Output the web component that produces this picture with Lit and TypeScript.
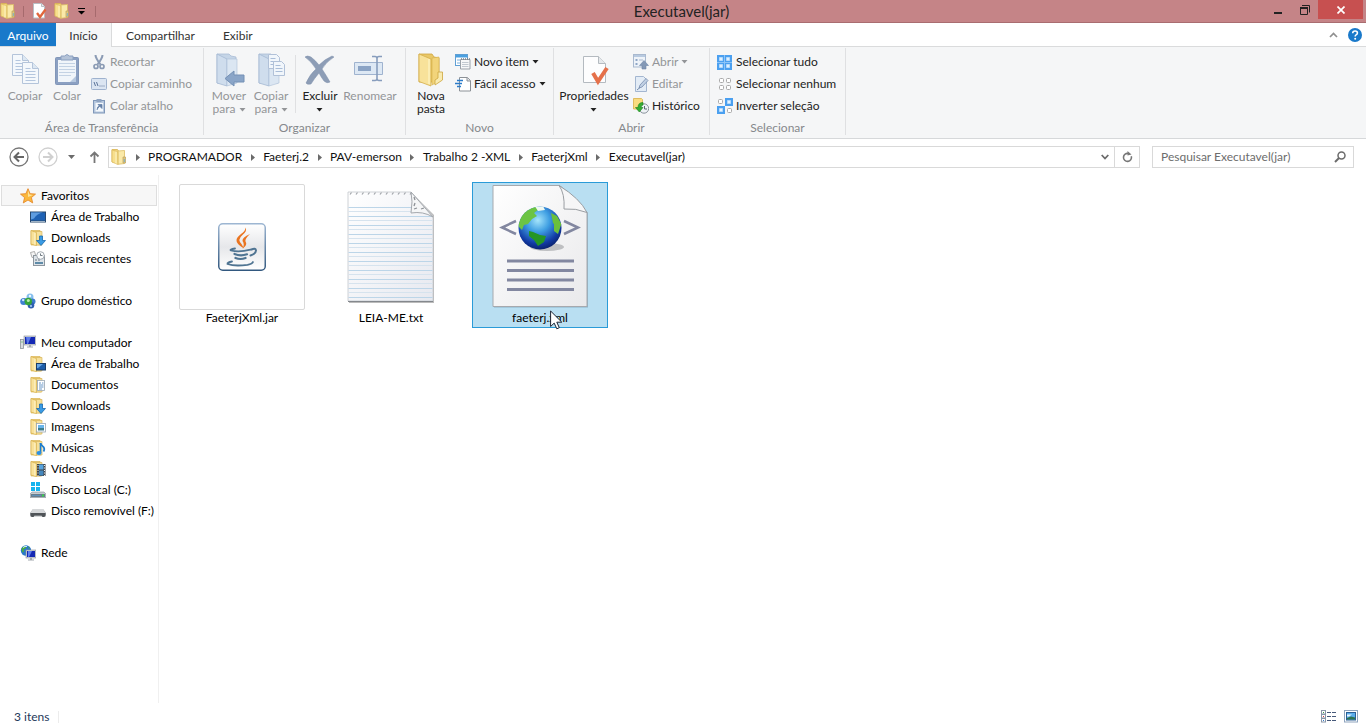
import { LitElement, html, css, svg, nothing, type TemplateResult, type SVGTemplateResult } from "lit";
import { customElement } from "lit/decorators.js";

const icon = (w: number, h: number, body: SVGTemplateResult, vw = w, vh = h) =>
  html`<svg width=${w} height=${h} viewBox="0 0 ${vw} ${vh}" aria-hidden="true">${body}</svg>`;

/* ---- shared shapes, drawn on a 16x16 grid ---- */
const folder = svg`
  <path d="M1 .5h5.500l1 1.500v11H1z" fill="#f0d27a" stroke="#d8b352" stroke-width=".8"/>
  <path d="M7 2l6.500-.5v13l-6.500.8z" fill="#fae9a8" stroke="#dcbd63" stroke-width=".8"/>
  <path d="M1 .8L6.800 3v12.500L1 13z" fill="#f7df8d" stroke="#dab75a" stroke-width=".7"/>
  <path d="M5 2.500v12" stroke="#fdf3c4"/>
  <path d="M12 8h2.500v6H12z" fill="#e3c77a" stroke="#b9a160" stroke-width=".7"/><path d="M13.300 10v3" stroke="#7ab0c8"/>`;
const sideFolder = svg`
  <path d="M1 .5h9l1 1v13.500H1z" fill="#e9c565" stroke="#d6b04c" stroke-width=".6"/>
  <path d="M6 1.500h6v13.500H6z" fill="#f6e09a" stroke="#dab963" stroke-width=".7"/>
  <path d="M1 .5l5.500 2.200v13L1 14z" fill="#f8e19a" stroke="#d8b352" stroke-width=".7"/>
  <path d="M4.800 2.500v12" stroke="#fdf2c6"/>`;
const globe = svg`
  <circle cx="6" cy="5.500" r="5.200" fill="#2a78c8"/>
  <path d="M1.500 4c1-2.500 3-3.300 5-3l-1 2.500-2 1 .5 2-1.500 1zM6 5.500l3 .5-1 3.500-2-1zM8 1.500l2 1.500-1 1z" fill="#4cae3c"/>
  <path d="M3 2.500q2-1.700 4-1" stroke="#d5f0ff" fill="none"/>`;
const monitor = (x: number, y: number, w: number, h: number) => svg`
  <rect x=${x} y=${y} width=${w} height=${h} fill="#cfd3d8" stroke="#8b9299" stroke-width=".6"/>
  <rect x=${x + 1} y=${y + 1} width=${w - 2} height=${h - 2} fill="#1428b4"/>
  <path d="M${x + 2} ${y + 1}h${w / 2 - 1}l-3 ${h - 2}h-1z" fill="#5c7bea"/>
  <path d="M${x + w / 2 - 1} ${y + h}h2v1.500h2v1h-6v-1h2z" fill="#a4aab0"/>`;

const small: Record<string, SVGTemplateResult> = {
  folder,
  props: svg`<path d="M2.500 .5h8l3 3v11.500h-11z" fill="#fff" stroke="#b9bec4"/><path d="M10.500 .5v3h3" fill="#e8ebee" stroke="#b9bec4"/>
    <path d="M6 10l3 4 5.500-7.500" fill="none" stroke="#e0663c" stroke-width="2.300"/>`,
  cut: svg`<g fill="none" stroke="#8b9bb4"><path d="M4.500 1q0 3 5 9.500M11.500 1q0 3-5 9.500" stroke-width="2"/><circle cx="5" cy="12.500" r="2" stroke-width="1.700"/><circle cx="11" cy="12.500" r="2" stroke-width="1.700"/></g>`,
  path: svg`<rect x=".5" y="2.500" width="15" height="11" rx="1" fill="#dbe5f2" stroke="#9fb2ce"/><path d="M3 6l1.500 4M5.500 6l1.500 4" stroke="#5c7499"/><path d="M8.500 10h1M10.500 10h1M12.500 10h1" stroke="#5c7499"/>`,
  shortcut: svg`<rect x="2.500" y="2.500" width="11" height="12.500" fill="#b7c8de" stroke="#7f97b9"/><rect x="5.500" y="1" width="5" height="3" fill="#8ea3c1"/><rect x="4.500" y="5" width="7.500" height="8.500" fill="#f4f8fc"/><path d="M6 12q0-4 3-4M7 6.500h4v4z" fill="#6682a8" stroke="#6682a8" stroke-width=".8"/>`,
  newItem: svg`<rect x=".5" y=".5" width="12" height="11" fill="#fff" stroke="#5f9fd4"/><path d="M1 1h11v2.500H1z" fill="#4aa0e0"/><path d="M2 6h3M2 9h3" stroke="#79aedb"/>
    <path d="M5.500 5.500h9.500v9.500h-9.500z" fill="#f7f8f9" stroke="#9aa1a9"/><path d="M7 8.500h6.500M7 10.500h6.500M7 12.500h6.500" stroke="#b4bdc7" stroke-width=".8"/><path d="M6.500 4v2M8.500 4v2M10.500 4v2M12.500 4v2M14.500 4v2" stroke="#7c858e" stroke-width=".8"/>`,
  easy: svg`<path d="M4.500 1.500h8l3 3v10.500h-11z" fill="#fff" stroke="#8c9197"/><path d="M12 1.500v3.500h3.500" fill="#dfe3e7" stroke="#8c9197"/><path d="M2 4.500h6M0 7.500h7M2 10.500h4" stroke="#2b7bc9" stroke-width="1.300"/>`,
  open: svg`<rect x=".5" y=".5" width="12" height="12.500" fill="#eef3f9" stroke="#a9b9cf"/><path d="M1 1h11v2H1z" fill="#b8cae0"/><path d="M2.500 5h2v2h-2zM2.500 9h2v2h-2z" fill="#8fa7c7"/><path d="M6 6h4" stroke="#a9b9cf"/><path d="M11 6.500l4.500 5h-2.500v3.500h-4v-3.500H6.500z" fill="#8398b6" stroke="#6f86a8" stroke-width=".6"/>`,
  edit: svg`<path d="M2.500 .5h8l3 3v12h-11z" fill="#e3ecf6" stroke="#a3b6d0"/><path d="M6 12l1-3 6-6.500 2 2-6 6.500z" fill="#c0d0e4" stroke="#768cad" stroke-width=".8"/><path d="M4 14l3-2.500" stroke="#768cad"/>`,
  history: svg`<path d="M.5 .5h8l1 1v9.500H.5z" fill="#f9dc80" stroke="#d9b049" stroke-width=".8"/><circle cx="11" cy="10.500" r="4.700" fill="#eef2f5" stroke="#88929b"/><path d="M11.500 8v3h2.500" fill="none" stroke="#5b6570"/><path d="M10 4.500q-5 0-5 5H2.500l3.800 4.500 3.700-4.500H8q0-2.200 2-2.500z" fill="#35ad33" stroke="#17801b" stroke-width=".6"/>`,
  selAll: svg`<path d="M0 1h15v15H0z" fill="#4ba0f0"/><path d="M7.500 1v15M0 8.500h15" stroke="#8cc4f8"/><path d="M2.500 3.500h3v3h-3zM9.500 3.500h3v3h-3zM2.500 10.500h3v3h-3zM9.500 10.500h3v3h-3z" fill="#dff0ff" stroke="#b4dafc"/>`,
  selNone: svg`<g fill="#fff" stroke="#a8a8a8"><rect x="2.500" y="2.500" width="4" height="4" rx="1"/><rect x="9.500" y="2.500" width="4" height="4" rx="1"/><rect x="2.500" y="9.500" width="4" height="4" rx="1"/><rect x="9.500" y="9.500" width="4" height="4" rx="1"/></g>`,
  selInv: svg`<path d="M8 0h8v8H8zM0 8h8v8H0z" fill="#4ba0f0"/><g fill="#e6f4ff" stroke="#b4dafc"><path d="M10.500 2.500h3v3h-3zM2.500 10.500h3v3h-3z"/></g><g fill="#fff" stroke="#a8a8a8"><rect x="1.500" y="1.500" width="4" height="4" rx="1"/><rect x="10.500" y="10.500" width="4" height="4" rx="1"/></g>`,
  star: svg`<path d="M8 .7l2.100 5 5.400.4-4.100 3.500 1.300 5.300L8 12l-4.700 2.900 1.300-5.300L.5 6.100l5.400-.4z" fill="#fbb83c" stroke="#e58a2c" stroke-width=".9"/><path d="M8 2.500l1.400 4 3.600.4-5 2z" fill="#fde39a"/>`,
  desktop: svg`<rect x="0" y="2.500" width="16" height="11" fill="#27486f"/><rect x="1" y="3.500" width="14" height="8" fill="#1f62b4"/><path d="M1 3.500h12q-6 1-9 6l-3 1z" fill="#5e9ce0"/><path d="M1 12.500h14" stroke="#9fb3c6"/>`,
  downloads: svg`${sideFolder}<path d="M9.500 6h3v4.500h3L11 15.500 6.500 10.500h3z" fill="#3a9be4" stroke="#1769b3" stroke-width=".8"/>`,
  recent: svg`<path d="M.5 1.500l4-1 1.500 5-4 1z" fill="#f5f5f5" stroke="#9a9a9a" stroke-width=".8"/><rect x="3.500" y="4.500" width="11" height="10" fill="#dde3e8" stroke="#8d969e"/><path d="M5 12h8" stroke="#5f8ba8" stroke-width="2"/><path d="M5 9h2M8 9h2" stroke="#6b7681"/><circle cx="10.500" cy="4.500" r="3.800" fill="#fafcfd" stroke="#a2a9b0"/><path d="M10.500 2.500v2h2" fill="none" stroke="#4e5962" stroke-width=".8"/>`,
  homegroup: svg`<circle cx="3.800" cy="8.500" r="3.600" fill="#3f80d2"/><circle cx="10" cy="4" r="3.500" fill="#86bfee"/><circle cx="12.500" cy="8.500" r="3" fill="#3c7bcb"/><circle cx="11" cy="12.300" r="3.300" fill="#2f5fb0"/><circle cx="8.300" cy="8.500" r="3.700" fill="#36a53a"/><circle cx="3.200" cy="7" r="1.200" fill="#cfe5fb"/><circle cx="10" cy="3" r="1.200" fill="#edf8ff"/><circle cx="11" cy="13" r="1.100" fill="#a7cdf4"/><circle cx="8.300" cy="7.500" r="1.500" fill="#b8edae"/>`,
  computer: svg`<rect x=".5" y="4.500" width="3" height="9" fill="#d9dcdf" stroke="#8d949b" stroke-width=".8"/><path d="M1.500 7h1" stroke="#2fb23a"/>${monitor(4, 1, 12, 9)}`,
  fDesktop: svg`${sideFolder}<rect x="6.500" y="7.500" width="9" height="6.500" fill="#1f5ea9" stroke="#1b3d68"/><path d="M7 8h6l-5 4h-1z" fill="#68a7e6"/>`,
  fDocs: svg`${sideFolder}<rect x="7.500" y="3.500" width="7" height="10" fill="#fff" stroke="#9aa7b4" stroke-width=".8"/><path d="M9 6h2M12 6h1.500M9 8h4.500M9 10h4.500M9 12h3" stroke="#5a8cc2" stroke-width=".9"/>`,
  fPics: svg`${sideFolder}<rect x="6.500" y="4.500" width="9" height="8.500" fill="#fff" stroke="#9aa7b4" stroke-width=".8"/><rect x="8" y="6" width="6" height="3" fill="#67b4ea"/><rect x="8" y="9" width="6" height="2.500" fill="#3e7d8c"/>`,
  fMusic: svg`${sideFolder}<path d="M10.500 3q0 2 3 4 1.500 2 0 4.500" fill="none" stroke="#1d7dd0" stroke-width="1.800"/><path d="M10.500 3v10" stroke="#1d7dd0" stroke-width="1.600"/><ellipse cx="9" cy="13" rx="2.500" ry="2" fill="#2b90e4"/>`,
  fVideo: svg`${sideFolder}<rect x="7" y="3" width="8.500" height="12" fill="#3e4348"/><rect x="9" y="3.500" width="4.500" height="5" fill="#57a3de"/><rect x="9" y="9.500" width="4.500" height="5" fill="#4588bd"/><path d="M8 4v11M14.500 4v11" stroke="#eee" stroke-dasharray="1 1.500"/>`,
  disk: svg`<path d="M1 0h4v4H1zM6 0h4v4H6zM1 5h4v4H1zM6 5h4v4H6z" fill="#16b4ee"/><path d="M2 10h12l2 2v3.500H0V12z" fill="#c4cbd1" stroke="#868f97" stroke-width=".6"/><rect x="1" y="12" width="14" height="3" fill="#6b7d8b"/><path d="M2 13.500h9" stroke="#5c90b8"/><path d="M12 13.500h2" stroke="#38d44b" stroke-width="2"/>`,
  removable: svg`<path d="M3 6h10l3 4v3.500H0V10z" fill="#a9adb0"/><path d="M3 6h10l2.500 4H.5z" fill="#d6d8da"/><path d="M.5 10h15v2l-1 2h-2l-1-1.500H4.500L3.500 14h-2l-1-2z" fill="#505458"/>`,
  network: svg`${globe}${monitor(6, 5, 10, 8)}`,
};

const deskFolder = (extra: SVGTemplateResult) => svg`
  <path d="M5 1h12l2 2 5 1v26H5z" fill="#c5d5e7" stroke="#a9bdd6" stroke-width=".8"/>
  <path d="M5 1l10 5v27L5 30z" fill="#cfdded" stroke="#a4b9d3" stroke-width=".8"/>
  <path d="M15 6h10v24l-10 3z" fill="#dbe6f2" stroke="#adc0d7" stroke-width=".6"/>${extra}`;
const page = (x: number, y: number) => svg`
  <path d="M${x} ${y}h10l6 6v15h-16z" fill="#f4f8fc" stroke="#b4c4da"/>
  <path d="M${x + 10} ${y}v6h6" fill="#dce7f2" stroke="#b4c4da"/>
  <path d="M${x + 3} ${y + 6}h5M${x + 3} ${y + 9}h10M${x + 3} ${y + 12}h10M${x + 3} ${y + 15}h10M${x + 3} ${y + 18}h10" stroke="#b4c6de"/>`;
const miniPage = (x: number, y: number) => svg`
  <path d="M${x} ${y}h8l3 3v11h-11z" fill="#f1f6fb" stroke="#b1c1d8"/>
  <path d="M${x + 2} ${y + 4}h5M${x + 2} ${y + 7}h7M${x + 2} ${y + 10}h7" stroke="#a9bdd8"/>`;

const large: Record<string, SVGTemplateResult> = {
  copy: svg`${page(4.500, 1.500)}${page(14.500, 9.500)}`,
  paste: svg`<rect x="5.500" y="4.500" width="23" height="27" rx="1" fill="#8ba0c2" stroke="#8196b8"/><rect x="8" y="7" width="18" height="22" fill="#f0f5fa"/><path d="M9 10.500h16M9 13.500h16M9 16.500h16M9 19.500h16M9 22.500h12" stroke="#c3d2e4"/><path d="M20 29l6-6v6z" fill="#b5c7de"/><path d="M11 3h3.500q2.500-3 5 0H23v4H11z" fill="#b4c3d8" stroke="#8ba0c0"/>`,
  move: deskFolder(svg`<path d="M22 18l-9 7.500 9 7.500v-4h10v-7H22z" fill="#8aa5c8" stroke="#7490b5"/>`),
  copyTo: deskFolder(svg`${miniPage(14.500, 1.500)}${miniPage(19.500, 8.500)}`),
  remove: svg`<path d="M2 4q2-2 6 0 4 3 8 8Q22 6 29 3l2 1q-8 5-12 12 4 6 8 13-3 2-6-1-3-4-5-8-5 6-8 11-4 1-5-1 4-9 10-14Q8 8 2 4z" fill="#8d9db6" stroke="#7d8faa" stroke-width=".5"/>`,
  rename: svg`<path d="M1.500 9.500h28v12h-28z" fill="#dde8f4" stroke="#9fb3cf"/><path d="M5 13h13v5H5z" fill="#8aa3c5"/><path d="M19 3.500h3q2 0 2 2v20q0 2-2 2h-3M29 3.500h-3q-2 0-2 2v20q0 2 2 2h3" fill="none" stroke="#879dbd" stroke-width="1.600"/>`,
  newFolder: svg`<path d="M5 1h13l2 3 5 1v24H5z" fill="#e9c766" stroke="#cfa63f" stroke-width=".8"/><path d="M18 5l7-1v24l-7 4z" fill="#f2d47a" stroke="#d4ae4a" stroke-width=".6"/><path d="M5 1l12 5v27L5 28.500z" fill="#f8e29a" stroke="#d4ae4a" stroke-width=".8"/><path d="M15 6v25" stroke="#fdf1bd" stroke-width="1.500"/><path d="M24 19h4.500v8L21 32v-5l3-2z" fill="#f9ebb0" stroke="#cda63f" stroke-width=".8"/>`,
  properties: svg`<path d="M6.500 3.500h15l7 7v19h-22z" fill="#fdfdfe" stroke="#b4bac0"/><path d="M21.500 3.500v7h7" fill="#e6e9ec" stroke="#b4bac0"/><path d="M16 20l5 8.500 9-13.500" fill="none" stroke="#e5704a" stroke-width="4"/>`,
};

const caret = () => html`<svg class="caret" width="7" height="4" viewBox="0 0 7 4" aria-hidden="true"><path d="M.5 0h6L3.500 3.500z" fill="currentColor"/></svg>`;

type Big = { k: string; lines: string[]; off?: boolean; drop?: boolean; w: string };
type Small = { k: string; t: string; off?: boolean; drop?: boolean };
type Group = { name: string; big: (Big | null)[]; small: Small[]; w: string };

const groups: Group[] = [
  { name: "Área de Transferência", w: "g-clip", big: [{ k: "copy", lines: ["Copiar"], off: true, w: "b-m" }, { k: "paste", lines: ["Colar"], off: true, w: "b-m" }],
    small: [{ k: "cut", t: "Recortar", off: true }, { k: "path", t: "Copiar caminho", off: true }, { k: "shortcut", t: "Colar atalho", off: true }] },
  { name: "Organizar", w: "g-org", big: [{ k: "move", lines: ["Mover", "para"], off: true, drop: true, w: "b-m" }, { k: "copyTo", lines: ["Copiar", "para"], off: true, drop: true, w: "b-m" }, null,
    { k: "remove", lines: ["Excluir", ""], drop: true, w: "b-m" }, { k: "rename", lines: ["Renomear"], off: true, w: "b-l" }], small: [] },
  { name: "Novo", w: "g-new", big: [{ k: "newFolder", lines: ["Nova", "pasta"], w: "b-m" }], small: [{ k: "newItem", t: "Novo item", drop: true }, { k: "easy", t: "Fácil acesso", drop: true }] },
  { name: "Abrir", w: "g-open", big: [{ k: "properties", lines: ["Propriedades", ""], drop: true, w: "b-xl" }],
    small: [{ k: "open", t: "Abrir", off: true, drop: true }, { k: "edit", t: "Editar", off: true }, { k: "history", t: "Histórico" }] },
  { name: "Selecionar", w: "g-sel", big: [], small: [{ k: "selAll", t: "Selecionar tudo" }, { k: "selNone", t: "Selecionar nenhum" }, { k: "selInv", t: "Inverter seleção" }] },
];

const places: { k: string; t: string; on?: boolean; kids: [string, string][] }[] = [
  { k: "star", t: "Favoritos", on: true, kids: [["desktop", "Área de Trabalho"], ["downloads", "Downloads"], ["recent", "Locais recentes"]] },
  { k: "homegroup", t: "Grupo doméstico", kids: [] },
  { k: "computer", t: "Meu computador", kids: [["fDesktop", "Área de Trabalho"], ["fDocs", "Documentos"], ["downloads", "Downloads"], ["fPics", "Imagens"], ["fMusic", "Músicas"], ["fVideo", "Vídeos"], ["disk", "Disco Local (C:)"], ["removable", "Disco removível (F:)"]] },
  { k: "network", t: "Rede", kids: [] },
];

const crumbs = ["PROGRAMADOR", "Faeterj.2", "PAV-emerson", "Trabalho 2 -XML", "FaeterjXml", "Executavel(jar)"];

const jarArt = html`<span class="thumb"><svg width="48" height="48" viewBox="0 0 48 48" aria-hidden="true">
  <defs><linearGradient id="jb" x1="0" y1="0" x2="0" y2="1"><stop offset="0" stop-color="#fff"/><stop offset=".5" stop-color="#e6e7ea"/><stop offset="1" stop-color="#fff"/></linearGradient>
  <linearGradient id="je" x1="0" y1="0" x2="0" y2="1"><stop offset="0" stop-color="#9db6d2"/><stop offset="1" stop-color="#32587f"/></linearGradient></defs>
  <rect x=".75" y=".75" width="46.500" height="46.500" rx="4" fill="url(#jb)" stroke="url(#je)" stroke-width="1.500"/>
  <path d="M27.500 4.500q2 3.500-3 7.500-5.500 4.500-1 9l2.500 4.500q-8-4.500-7.500-8.500 0-2.500 4.500-6 4.500-3 4.500-6.500z" fill="#ea7420"/>
  <path d="M32 11q-8 3.500-7.500 7 2.500 3.500 0 7.500 5.500-3.500 3-7-1-2.500 4.500-7.500z" fill="#ea7420"/>
  <g fill="none" stroke="#4f7492" stroke-linecap="round"><path d="M17 25.500q-6 1-4 2 8 2 19.500-.8" stroke-width="1.800"/><path d="M33.500 26.500q4-2 4.500 1 0 3-5.500 5" stroke-width="2"/><path d="M16.500 31q6 2.500 12.500.3M17.500 35q5 2 10 0" stroke-width="2.200"/><path d="M14 38.500q-5 1-4.500 2.500 7 2.500 20 .8 5-1 5.500-2.800" stroke-width="1.800"/></g>
</svg></span>`;

const ruled = Array.from({ length: 11 }, (_, i) => 16 + i * 9);
const txtArt = html`<svg width="88" height="114" viewBox="0 0 88 114" aria-hidden="true">
  <defs><linearGradient id="tp" x1="0" y1="0" x2="1" y2="1"><stop offset="0" stop-color="#fff"/><stop offset="1" stop-color="#e7e9f0"/></linearGradient></defs>
  <path d="M2 3h63l22 22v88H2z" fill="#777" opacity=".5"/>
  <path d="M1 2h63l22 24v85H1z" fill="url(#tp)" stroke="#c3c6cb" stroke-width=".8"/>
  ${ruled.map(y => svg`<path d="M1.500 ${y + 1.5}h${y < 22 ? 63 : 84}" stroke="#bcd5e8"/><path d="M1.500 ${y + 5.5}h${y < 22 ? 63 : 84}" stroke="#d6e3ee"/>`)}
  <path d="M64 2q2 9 0 21 12-2 22 4z" fill="#f5f6f7" stroke="#a4a8ad"/>
  <path d="M67 7l1 3M68 13l-1 3M67 19l3-1M74 19l3-1" stroke="#8d9196" stroke-width="1.300"/>
  ${Array.from({ length: 11 }, (_, i) => svg`<path d="M${3 + i * 6} 4.500l1.500-2" stroke="#a0a4a9" stroke-width="1.200"/>`)}
  <path d="M1 111.500h85" stroke="#84888d"/>
</svg>`;

const xmlArt = html`<svg width="100" height="126" viewBox="0 0 100 126" aria-hidden="true">
  <defs><linearGradient id="xp" x1="0" y1="0" x2="1" y2="1"><stop offset="0" stop-color="#fff"/><stop offset="1" stop-color="#e9e9eb"/></linearGradient>
  <radialGradient id="xg" cx=".45" cy=".32" r=".68"><stop offset="0" stop-color="#a5e5fb"/><stop offset=".4" stop-color="#3e9ee2"/><stop offset=".8" stop-color="#123ba5"/><stop offset="1" stop-color="#0a2370"/></radialGradient>
  <clipPath id="xc"><circle cx="50" cy="44" r="21.500"/></clipPath></defs>
  <path d="M4 3h68l26 26v94.500H4z" fill="#5a7d93" opacity=".45"/>
  <path d="M3 1.500h67l27 27v94H3z" fill="url(#xp)" stroke="#a6a9ae"/>
  <path d="M69 1.500q6 8 5 23.500 12-1 23 3.500-7-14-28-27z" fill="#f6f6f7" stroke="#9a9ea3"/>
  <ellipse cx="57" cy="63" rx="17" ry="4" fill="#8b8d92" opacity=".5"/>
  <circle cx="50" cy="44" r="21.500" fill="url(#xg)"/>
  <g clip-path="url(#xc)"><path d="M31 32q5-8 13-10l5 3-5 4 3 3-5 3-4 5-4 1-2 5-4-4z" fill="#6cc443"/><path d="M39 47l4 1 7 3 6 1-2 6-6 4-4-6-5-4z" fill="#259625"/><path d="M61 29l6 3 5 9-5 2-4-4zM64 39l7 2-3 9-4-3z" fill="#6abf3b"/><path d="M45 22.500l8-.5 2 4-7 1z" fill="#eef8f2"/></g>
  <g fill="none" stroke="#8287a0" stroke-width="2.500"><path d="M26 37L12 43.500 26 50M74 37l14 6.500L74 50"/><path d="M17 77h67M17 86.500h67M17 96h67M17 105.500h67" stroke-width="3"/></g>
</svg>`;

@customElement("app-root")
export class AppRoot extends LitElement {
  static styles = css`
    :host { display: flex; flex-direction: column; min-height: 100vh; background: #fff; color: #000;
      font-family: Lato, "Open Sans", sans-serif; font-size: 12px; line-height: 16px; }
    * { box-sizing: border-box; }
    button { font: inherit; color: inherit; background: none; border: 0; padding: 0; margin: 0; }
    svg { display: block; flex: none; }
    a { color: inherit; text-decoration: none; }

    .title { display: grid; grid-template-columns: 1fr auto 1fr; height: 23px; padding-right: 3px; background: #c58487; border-bottom: 1px solid #a96d70; }
    .title h1 { margin: 0; font-size: 15px; font-weight: 400; line-height: 22px; color: #222; }
    .quick { display: flex; align-items: center; gap: 7px; }
    .quick .bar:last-child { margin-left: 2px; }
    .bar { width: 1px; height: 11px; background: #a66a6d; }
    .win { display: flex; justify-content: flex-end; color: #222; }
    .win button { width: 27px; height: 19px; display: grid; place-items: center; }
    .win .close { width: 45px; background: #c75050; color: #fff; }

    .tabs { display: flex; height: 24px; border-bottom: 1px solid #dadbdc; }
    .tabs button { padding: 2px 14px 0; color: #333; white-space: nowrap; }
    .tabs .file { width: 56px; padding: 2px 0 0; background: #1979ca; color: #fff; }
    .tabs .on { width: 56px; padding: 2px 0 0; height: 24px; background: #f5f6f7; border-right: 1px solid #dadbdc; }
    .tabs .end { margin-left: auto; display: flex; align-items: center; gap: 10px; padding-right: 4px; }
    .tabs .end button { padding: 0; }

    .ribbon { display: flex; height: 92px; padding-top: 1px; background: #f5f6f7; border-bottom: 1px solid #d6d8da; color: #222; }
    .group { display: flex; flex-direction: column; margin-bottom: 3px; border-right: 1px solid #dfe0e2; }
    .g-clip { width: 204px; } .g-org { width: 202px; } .g-new { width: 148px; } .g-open { width: 156px; } .g-sel { width: 136px; }
    .tools { display: flex; height: 74px; padding: 3px 4px 0; }
    .group h2 { margin: 0; text-align: center; font-size: 12px; font-weight: 400; line-height: 14px; color: #85888c; }
    .big { display: flex; flex-direction: column; align-items: center; padding-top: 2px; line-height: 13px; white-space: nowrap; }
    .big svg.caret { display: inline-block; vertical-align: middle; }
    .big .txt { padding-top: 2px; text-align: center; }
    .b-m { width: 42px; } .b-l { width: 58px; } .b-xl { width: 72px; }
    .split { width: 1px; height: 58px; margin: 4px 3px; background: #dfe0e2; }
    .stack { display: flex; flex-direction: column; padding-left: 3px; }
    .row { display: flex; align-items: center; gap: 3px; height: 22px; white-space: nowrap; }
    .ribbon .off { color: #939598; }

    .address { display: flex; align-items: flex-start; padding: 7px 12px 7px 9px; color: #6b6b6b; }
    .arrows { display: flex; align-items: center; width: 99px; height: 22px; }
    .arrows button { margin-right: 9px; }
    .box { display: flex; align-items: center; height: 22px; border: 1px solid #d9d9d9; background: #fff; }
    .path { flex: 1; padding-left: 2px; }
    .crumb { color: #111; white-space: nowrap; }
    .sep { width: 21px; display: grid; place-items: center; }
    .path .drop { margin-left: auto; width: 19px; display: grid; place-items: center; }
    .path .reload { width: 25px; height: 20px; border-left: 1px solid #d9d9d9; display: grid; place-items: center; }
    .search { width: 202px; margin-left: 12px; padding: 0 7px 0 8px; }
    .search input { flex: 1; min-width: 0; font: inherit; border: 0; outline: 0; padding: 0; background: none; }
    .search input::placeholder { color: #6d6d6d; opacity: 1; }

    .body { display: flex; flex: 1; }
    nav { width: 159px; padding: 10px 1px 0; border-right: 1px solid #f0f0f0; }
    nav ul { list-style: none; margin: 0; padding: 0; }
    nav .place { margin-bottom: 21px; }
    nav a { display: flex; align-items: center; gap: 5px; height: 21px; padding-left: 19px; white-space: nowrap; }
    nav ul ul a { padding-left: 29px; }
    nav a.on { padding-left: 18px; background: #f7f7f7; border: 1px solid #dedede; }
    .files { display: flex; flex: 1; align-items: flex-start; gap: 13px; padding: 7px 15px; }
    .file-item { position: relative; display: flex; flex-direction: column; align-items: center; width: 136px; height: 146px; padding: 1px 0; border: 1px solid transparent; }
    .file-item.sel { background: #b9dff2; border-color: #2a9bd8; }
    .art { display: grid; place-items: center; height: 126px; }
    .thumb { display: grid; place-items: center; width: 126px; height: 126px; border: 1px solid #d9d9d9; border-radius: 2px; background: #fff; }
    .pointer { position: absolute; left: 77px; top: 127px; }

    .status { display: flex; align-items: center; height: 24px; padding: 3px 8px 0 14px; color: #1e395b; }
    .status i { width: 1px; height: 12px; margin-left: 9px; background: #ececec; }
    .views { display: flex; gap: 7px; margin-left: auto; }
  `;

  private bigButton(b: Big | null): TemplateResult {
    if (!b) return html`<span class="split"></span>`;
    const last = b.lines.length - 1;
    return html`<button class="big ${b.w} ${b.off ? "off" : ""}">${icon(34, 34, large[b.k])}
      <span class="txt">${b.lines.map((l, i) => html`${i ? html`<br>` : nothing}${l}${b.drop && i === last ? html` ${caret()}` : nothing}`)}</span></button>`;
  }

  private group(g: Group) {
    return html`<section class="group ${g.w}">
      <div class="tools">${g.big.map(b => this.bigButton(b))}
        ${g.small.length ? html`<div class="stack">${g.small.map(s => html`<button class="row ${s.off ? "off" : ""}">${icon(16, 16, small[s.k])}${s.t}${s.drop ? caret() : nothing}</button>`)}</div>` : nothing}
      </div><h2>${g.name}</h2></section>`;
  }

  render() {
    return html`
      <header class="title">
        <div class="quick">
          ${icon(16, 16, folder)}<span class="bar"></span>
          <button aria-label="Propriedades">${icon(16, 16, small.props)}</button>
          <button aria-label="Nova pasta">${icon(16, 16, folder)}</button>
          <button aria-label="Personalizar">${icon(9, 8, svg`<path d="M1 1.500h7" stroke="#000"/><path d="M1 4h7L4.500 7.500z"/>`)}</button>
          <span class="bar"></span>
        </div>
        <h1>Executavel(jar)</h1>
        <div class="win">
          <button aria-label="Minimizar">${icon(8, 10, svg`<path d="M0 8h8" stroke="#222" stroke-width="2"/>`)}</button>
          <button aria-label="Restaurar">${icon(10, 10, svg`<path d="M2 .5h7.500v7" fill="none" stroke="#222"/><path d="M.5 3h7v6.500h-7z" fill="none" stroke="#222"/><path d="M0 3h8" stroke="#222" stroke-width="2"/>`)}</button>
          <button class="close" aria-label="Fechar">${icon(8, 8, svg`<path d="M.5 .5l7 7M7.500 .5l-7 7" stroke="#fff" stroke-width="1.700"/>`)}</button>
        </div>
      </header>
      <div class="tabs">
        <button class="file">Arquivo</button><button class="on">Início</button><button>Compartilhar</button><button>Exibir</button>
        <div class="end">
          <button aria-label="Minimizar a faixa">${icon(9, 6, svg`<path d="M1 5l3.500-3.500L8 5" fill="none" stroke="#8f8f8f" stroke-width="1.700"/>`)}</button>
          <button aria-label="Ajuda">${icon(14, 14, svg`<circle cx="7" cy="7" r="7" fill="#1979ca"/><path d="M4.700 5.200q0-2.200 2.400-2.200 2.300 0 2.300 2 0 1.200-1.300 1.900-.9.500-.9 1.600" fill="none" stroke="#fff" stroke-width="1.600"/><circle cx="7.200" cy="10.800" r="1" fill="#fff"/>`)}</button>
        </div>
      </div>
      <div class="ribbon">${groups.map(g => this.group(g))}</div>
      <div class="address">
        <div class="arrows">
          <button aria-label="Voltar">${icon(20, 20, svg`<circle cx="10" cy="10" r="9" fill="none" stroke="#777" stroke-width="1.300"/><path d="M15 10H6M10 5.500L5.500 10l4.500 4.500" fill="none" stroke="#666" stroke-width="2"/>`)}</button>
          <button aria-label="Avançar">${icon(20, 20, svg`<circle cx="10" cy="10" r="9" fill="none" stroke="#d0d0d0" stroke-width="1.300"/><path d="M5 10h9M10 5.500l4.500 4.500-4.500 4.500" fill="none" stroke="#d0d0d0" stroke-width="2"/>`)}</button>
          <button aria-label="Locais recentes">${icon(9, 8, svg`<path d="M1 2h7L4.500 6z" fill="#6b6b6b"/>`)}</button>
          <button aria-label="Acima">${icon(18, 14, svg`<path d="M9.500 13V3M5.500 6.500l4-4 4 4" fill="none" stroke="#777" stroke-width="1.800"/>`)}</button>
        </div>
        <div class="box path">${icon(16, 16, folder)}
          ${crumbs.map(c => html`<span class="sep">${icon(4, 7, svg`<path d="M0 0l4 3.500L0 7z" fill="#6b6b6b"/>`)}</span><button class="crumb">${c}</button>`)}
          <button class="drop" aria-label="Locais anteriores">${icon(8, 6, svg`<path d="M.7 1l3.300 3.500L7.300 1" fill="none" stroke="#6b6b6b" stroke-width="1.800"/>`)}</button>
          <button class="reload" aria-label="Atualizar">${icon(11, 12, svg`<path d="M9.300 5.200a4 4 0 1 1-2.800-2.700" fill="none" stroke="#777" stroke-width="1.600"/><path d="M5.500 0v4.500L9.500 3.500z" fill="#777"/>`)}</button>
        </div>
        <label class="box search"><input type="search" aria-label="Pesquisar Executavel(jar)" placeholder="Pesquisar Executavel(jar)">
          ${icon(12, 12, svg`<circle cx="7.500" cy="4.500" r="3.500" fill="none" stroke="#6b6b6b" stroke-width="1.500"/><path d="M5 7L1 11" stroke="#6b6b6b" stroke-width="2"/>`)}</label>
      </div>
      <div class="body">
        <nav><ul>${places.map(p => html`<li class="place"><a href="#" class=${p.on ? "on" : ""}>${icon(16, 16, small[p.k])}${p.t}</a>
          ${p.kids.length ? html`<ul>${p.kids.map(([k, t]) => html`<li><a href="#">${icon(16, 16, small[k])}${t}</a></li>`)}</ul>` : nothing}</li>`)}</ul></nav>
        <main class="files">
          <button class="file-item"><span class="art">${jarArt}</span>FaeterjXml.jar</button>
          <button class="file-item"><span class="art">${txtArt}</span>LEIA-ME.txt</button>
          <button class="file-item sel"><span class="art">${xmlArt}</span>faeterj.xml
            <svg class="pointer" width="13" height="20" viewBox="0 0 13 20" aria-hidden="true"><path d="M.6 1v15.500l3.600-3.400 2.600 5.700 2.500-1.100-2.500-5.500h5z" fill="#fff" stroke="#1c2333"/></svg></button>
        </main>
      </div>
      <footer class="status">3 itens<i></i>
        <div class="views">
          <button aria-label="Detalhes">${icon(16, 13, svg`<g fill="#fff" stroke="#8a97a8"><rect x=".5" y=".5" width="4" height="3.500"/><rect x=".5" y="4.500" width="4" height="3.500"/><rect x=".5" y="8.500" width="4" height="3.500"/></g><path d="M2 2.500h1" stroke="#3f9c46"/><path d="M2 6.500h1" stroke="#cf3b3b"/><path d="M2 10.500h1" stroke="#3579c9"/><path d="M6 2.500h4M11 2.500h4M6 6.500h4M11 6.500h4M6 10.500h4M11 10.500h4" stroke="#46597a"/>`)}</button>
          <button aria-label="Ícones grandes">${icon(14, 13, svg`<rect x=".5" y=".5" width="13" height="11.500" fill="#fff" stroke="#8fa4bd"/><rect x="2.500" y="2.500" width="9" height="7.500" fill="#5badea" stroke="#2b5f95"/><path d="M3 4.500h5l-3 2H3z" fill="#e8f6ff"/><path d="M3 8l4-1.500 4 1v2H3z" fill="#2d7350"/>`)}</button>
        </div>
      </footer>`;
  }
}
